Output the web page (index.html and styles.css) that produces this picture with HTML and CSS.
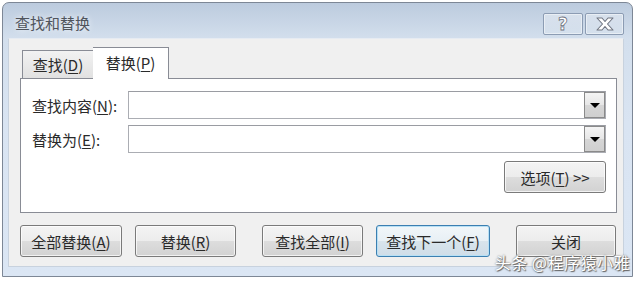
FILE: index.html
```html
<!DOCTYPE html>
<html>
<head>
	<meta charset="utf-8">
	<title>查找和替换</title>
	<link rel="stylesheet" href="styles.css">
</head>
<body>
	<div class="window">
		<div class="titlebar">
			<span class="title">查找和替换</span>
			<div class="caption">
				<span class="cap-btn help">?</span>
				<span class="cap-btn close">
					<svg width="18" height="14" viewBox="0 0 18 14">
						<polygon points="1,1 6,1 9,4.5 12,1 17,1 11.5,7 17,13 12,13 9,9.5 6,13 1,13 6.5,7" fill="#fff" stroke="#6f7480" stroke-width="1.1" stroke-linejoin="round"/>
					</svg>
				</span>
			</div>
		</div>
		<div class="client">
			<div class="tabs">
				<div class="tab">查找(<u>D</u>)</div>
				<div class="tab active">替换(<u>P</u>)</div>
			</div>
			<div class="panel">
				<div class="field">
					<label>查找内容(<u>N</u>):</label>
					<div class="combo"><span class="drop"></span></div>
				</div>
				<div class="field">
					<label>替换为(<u>E</u>):</label>
					<div class="combo"><span class="drop"></span></div>
				</div>
				<div class="opt-row">
					<button class="btn opt">选项(<u>T</u>) &gt;&gt;</button>
				</div>
			</div>
			<div class="actions">
				<button class="btn">全部替换(<u>A</u>)</button>
				<button class="btn">替换(<u>R</u>)</button>
				<button class="btn wide-gap">查找全部(<u>I</u>)</button>
				<button class="btn default">查找下一个(<u>F</u>)</button>
				<button class="btn wide-gap close-btn">关闭</button>
			</div>
		</div>
		<div class="frame-bottom"></div>
		<div class="watermark">头条 @程序猿小雅</div>
	</div>
</body>
</html>
```

FILE: styles.css
```css
*{
	margin: 0;
	padding: 0;
	box-sizing: border-box;
}
body{
	background: #fff;
	font-family: "Noto Sans CJK SC", "Noto Sans", sans-serif;
	font-size: 15px;
	color: #2a2a2a;
}
u{
	text-decoration: underline;
	text-underline-offset: 2px;
}
.window{
	position: relative;
	width: 631px;
	height: 275px;
	margin: 2px 0 0 2px;
	border: 1px solid #7d8796;
	border-radius: 7px 7px 0 0;
	background: linear-gradient(to bottom, #bccbde 0px, #d3dfed 36px, #d9e4f2 120px, #dbe6f4 100%);
	display: flex;
	flex-direction: column;
}
.titlebar{
	height: 35px;
	display: flex;
	justify-content: space-between;
	padding-left: 12px;
}
.title{
	font-size: 15px;
	color: #4f545c;
	line-height: 40px;
	text-shadow: 0 0 6px rgba(255,255,255,0.9);
}
.caption{
	display: flex;
	gap: 2px;
	margin: 10px 8px 0 0;
}
.cap-btn{
	height: 22px;
	width: 40px;
	border: 1px solid #8c9cb3;
	border-radius: 2px;
	background: linear-gradient(to bottom, rgba(255,255,255,0.35), rgba(255,255,255,0.1));
	box-shadow: inset 0 0 0 1px rgba(255,255,255,0.45);
	display: flex;
	align-items: center;
	justify-content: center;
}
.cap-btn.close{
	width: 39px;
}
.help{
	font-family: "DejaVu Sans", sans-serif;
	font-size: 17px;
	font-weight: bold;
	color: #fff;
	-webkit-text-stroke: 0.8px #6f7480;
	line-height: 20px;
}
.client{
	height: 229px;
	margin: 0 8px 0 5px;
	background: #f0f0f0;
	border: 1px solid #c8d2de;
	border-top-color: #e6ebf2;
	padding-top: 8px;
}
.tabs{
	display: flex;
	align-items: flex-end;
	height: 31px;
	padding-left: 13px;
	position: relative;
	z-index: 1;
}
.tab{
	height: 28px;
	width: 72px;
	border: 1px solid #898c95;
	border-bottom: none;
	background: linear-gradient(to bottom, #f2f2f2, #e1e1e1);
	text-align: center;
	line-height: 27px;
}
.tab.active{
	height: 32px;
	width: 76px;
	margin-left: -1px;
	background: #fff;
	border-left: none;
	line-height: 30px;
	margin-bottom: -1px;
}
.panel{
	width: 597px;
	height: 135px;
	margin-left: 11px;
	background: #fff;
	border: 1px solid #898c95;
	padding: 12px 10px 0 11px;
}
.field{
	display: flex;
	align-items: center;
	margin-bottom: 6px;
}
.field label{
	width: 96px;
}
.combo{
	flex: 1;
	height: 28px;
	border: 1px solid #abadb3;
	border-top-color: #9a9ca2;
	background: #fff;
	display: flex;
	justify-content: flex-end;
}
.drop{
	width: 21px;
	height: 26px;
	border: 1px solid #8a8a8a;
	background: linear-gradient(to bottom, #f4f4f4, #e6e6e6 50%, #d6d6d6 51%, #cfcfcf);
	display: flex;
	align-items: center;
	justify-content: center;
}
.drop::after{
	content: "";
	border-left: 5px solid transparent;
	border-right: 5px solid transparent;
	border-top: 5px solid #000;
}
.opt-row{
	display: flex;
	justify-content: flex-end;
	margin-top: 8px;
}
.btn{
	height: 32px;
	width: 101px;
	border: 1px solid #7a7a7a;
	border-radius: 3px;
	background: linear-gradient(to bottom, #f4f4f4 0%, #ececec 50%, #dddddd 51%, #d2d2d2 100%);
	box-shadow: inset 0 0 0 1px rgba(255,255,255,0.7);
	font-family: inherit;
	font-size: 15px;
	color: #2a2a2a;
}
.btn.opt{
	width: 102px;
}
.actions{
	display: flex;
	gap: 13px;
	margin-top: 12px;
	padding-left: 11px;
}
.actions .btn:first-child{
	width: 102px;
}
.actions .wide-gap{
	margin-left: 13px;
}
.btn.default{
	width: 114px;
	border-color: #3c7fb1;
	box-shadow: inset 0 0 0 1px #b7e0f5;
	background: linear-gradient(to bottom, #f1f6f9 0%, #e8f0f5 50%, #d8e4ec 51%, #cfdde8 100%);
}
.btn.close-btn{
	width: 100px;
}
.frame-bottom{
	flex: 1;
}
.watermark{
	position: absolute;
	right: 2px;
	bottom: 2px;
	font-size: 16px;
	color: #fff;
	letter-spacing: 0.5px;
	text-shadow: 0 0 2px #555, 1px 1px 1px #666;
}
```
